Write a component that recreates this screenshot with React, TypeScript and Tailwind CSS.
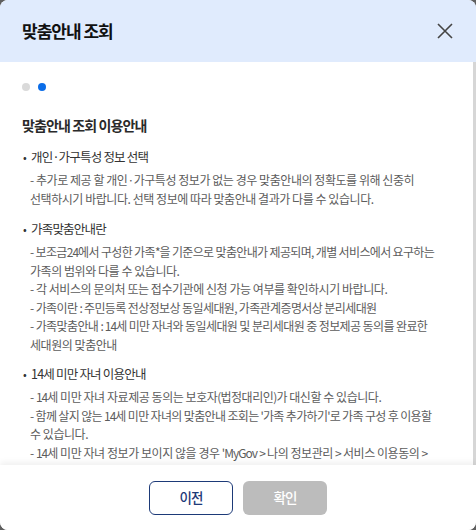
import React from "react";

const font = { fontFamily: '"Noto Sans CJK KR", "Noto Sans", sans-serif' };

function Bullet({ children }: { children: React.ReactNode }) {
  return (
    <div className="flex items-center leading-[20px] text-[12.5px] tracking-[-0.8px] text-[#333]">
      <span className="w-[10px] pl-[1px] text-[11px]">•</span>
      <span className="-ml-[1px]">{children}</span>
    </div>
  );
}

function Lines({ lines }: { lines: React.ReactNode[] }) {
  return (
    <div className="mt-[4px] pl-[8px] text-[12px] leading-[18.5px] tracking-[-0.45px] text-[#5c5c5c]">
      {lines.map((l, i) => (
        <div key={i} className="whitespace-nowrap">
          {l}
        </div>
      ))}
    </div>
  );
}

// latin runs in the reference font are narrower than in Noto CJK
const N = ({ children }: { children: React.ReactNode }) => (
  <span className="tracking-[-1px]">{children}</span>
);

export default function App() {
  return (
    <div className="h-[530px] w-[476px] bg-[#5f5f5f]" style={font}>
      <div className="flex h-full flex-col overflow-hidden rounded-[8px] bg-white">
        <div className="flex h-[62px] shrink-0 items-center justify-between bg-[#e0ebfd] pl-[22px] pr-[23px]">
          <h1 className="text-[17px] font-bold tracking-[-1px] text-[#111]">맞춤안내 조회</h1>
          <svg width="16" height="16" viewBox="0 0 16 16" className="text-[#444]">
            <path d="M1 1L15 15M15 1L1 15" stroke="currentColor" strokeWidth="1.6" />
          </svg>
        </div>

        <div className="flex min-h-0 flex-1">
          <div className="min-w-0 flex-1 overflow-hidden px-[22px] pt-[21px]">
            <div className="flex gap-2">
              <span className="h-2 w-2 rounded-full bg-[#dadada]" />
              <span className="h-2 w-2 rounded-full bg-[#0b6de8]" />
            </div>
            <h2 className="mt-[24px] text-[14px] font-semibold leading-[20px] tracking-[-0.9px] text-[#2a2a2a]">
              맞춤안내 조회 이용안내
            </h2>

            <div className="mt-[12px]">
              <Bullet>개인·가구특성 정보 선택</Bullet>
              <Lines
                lines={[
                  "- 추가로 제공 할 개인·가구특성 정보가 없는 경우 맞춤안내의 정확도를 위해 신중히",
                  "선택하시기 바랍니다. 선택 정보에 따라 맞춤안내 결과가 다를 수 있습니다.",
                ]}
              />
            </div>

            <div className="mt-[11px]">
              <Bullet>가족맞춤안내란</Bullet>
              <Lines
                lines={[
                  <span className="tracking-[-0.65px]">
                    - 보조금<N>24</N>에서 구성한 가족<N>*</N>을 기준으로 맞춤안내가 제공되며, 개별 서비스에서 요구하는
                  </span>,
                  "가족의 범위와 다를 수 있습니다.",
                  "- 각 서비스의 문의처 또는 접수기관에 신청 가능 여부를 확인하시기 바랍니다.",
                  <span className="tracking-[-0.6px]">
                    - 가족이란 <N>:</N> 주민등록 전상정보상 동일세대원<N>,</N> 가족관계증명서상 분리세대원
                  </span>,
                  <span className="tracking-[-0.6px]">
                    - 가족맞춤안내 <N>:</N> <N>14</N>세 미만 자녀와 동일세대원 및 분리세대원 중 정보제공 동의를 완료한
                  </span>,
                  "세대원의 맞춤안내",
                ]}
              />
            </div>

            <div className="mt-[10px]">
              <Bullet>14세 미만 자녀 이용안내</Bullet>
              <Lines
                lines={[
                  <span>
                    - <N>14</N>세 미만 자녀 자료제공 동의는 보호자<N>(</N>법정대리인<N>)</N>가 대신할 수 있습니다.
                  </span>,
                  <span className="tracking-[-0.65px]">
                    - 함께 살지 않는 <N>14</N>세 미만 자녀의 맞춤안내 조회는 <N>'</N>가족 추가하기<N>'</N>로 가족 구성 후 이용할
                  </span>,
                  "수 있습니다.",
                  <span>
                    - <N>14</N>세 미만 자녀 정보가 보이지 않을 경우 <N>'MyGov</N> <N>&gt;</N> 나의 정보관리 <N>&gt;</N> 서비스 이용동의 <N>&gt;</N>
                  </span>,
                  <span>
                    자녀 정보 제공 동의' 메뉴에서 <span className="text-[#7aa7e8]">자녀 정보제공 동의 여부를 확인</span>해 주세요.
                  </span>,
                ]}
              />
            </div>
          </div>
          <div className="w-[3px] shrink-0 bg-[#d6d6d6]" />
        </div>

        <div className="relative flex h-[65px] shrink-0 items-center justify-center gap-[10px] bg-white shadow-[0_-3px_6px_rgba(0,0,0,0.06)]">
          <button className="h-[34px] w-[84px] rounded-[6px] border border-[#1d3a78] text-[13.5px] font-medium tracking-[-0.8px] text-[#1d3a78]">
            이전
          </button>
          <button className="h-[34px] w-[84px] rounded-[6px] bg-[#bcbcbc] text-[13.5px] font-medium tracking-[-0.8px] text-white">
            확인
          </button>
        </div>
      </div>
    </div>
  );
}
